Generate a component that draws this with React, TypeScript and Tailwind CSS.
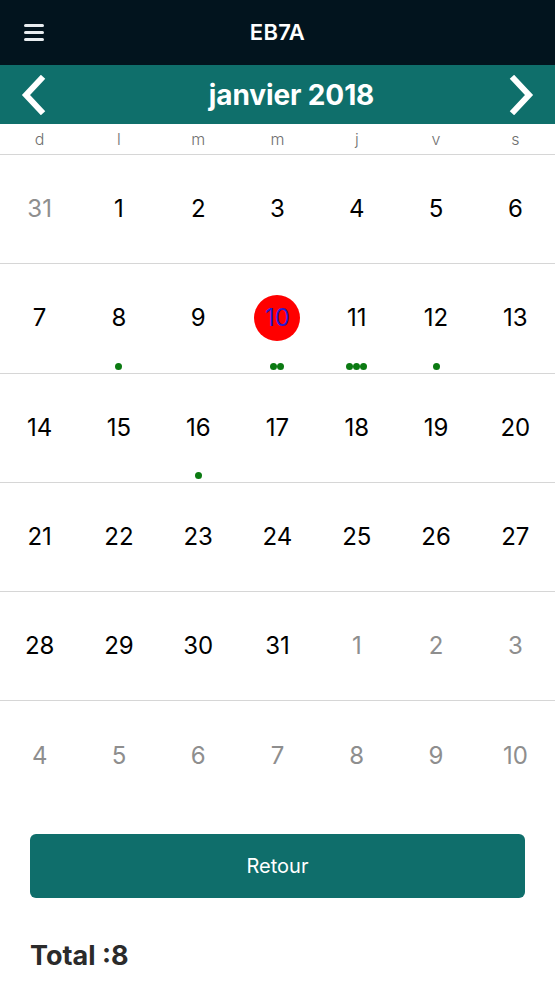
import React from 'react';

type Day = { n: number; muted?: boolean; today?: boolean; dots?: number };

const weekDays = ['d', 'l', 'm', 'm', 'j', 'v', 's'];

const dotsByDay: Record<number, number> = { 8: 1, 10: 2, 11: 3, 12: 1, 16: 1 };

function buildWeeks(): Day[][] {
  const days: Day[] = [{ n: 31, muted: true }];
  for (let i = 1; i <= 31; i++) {
    days.push({ n: i, today: i === 10, dots: dotsByDay[i] });
  }
  for (let i = 1; i <= 10; i++) days.push({ n: i, muted: true });
  const weeks: Day[][] = [];
  for (let i = 0; i < days.length; i += 7) weeks.push(days.slice(i, i + 7));
  return weeks;
}

function Chevron({ dir }: { dir: 'left' | 'right' }) {
  return (
    <svg width="30" height="40" viewBox="0 0 30 40" fill="none">
      <path
        d={dir === 'left' ? 'M23 4 L8 20 L23 36' : 'M7 4 L22 20 L7 36'}
        stroke="white"
        strokeWidth="6"
        strokeLinecap="square"
      />
    </svg>
  );
}

export default function App() {
  const weeks = buildWeeks();

  return (
    <div className="w-[555px] h-[987px] bg-white font-['Inter','Liberation_Sans',sans-serif] overflow-hidden">
      {/* Nav bar */}
      <div className="h-[65px] bg-[#02141e] flex items-center px-6 relative">
        <div className="flex flex-col gap-[4px] w-[20px]">
          <span className="h-[3px] bg-[#e8edf0] rounded-sm" />
          <span className="h-[3px] bg-[#e8edf0] rounded-sm" />
          <span className="h-[3px] bg-[#e8edf0] rounded-sm" />
        </div>
        <div className="flex-1 text-center text-white text-[22px] font-semibold tracking-[0.3px] -ml-[20px]">EB7A</div>
      </div>

      {/* Month header */}
      <div className="h-[59px] bg-[#0f6f6b] flex items-center justify-between px-[18px]">
        <Chevron dir="left" />
        <div className="text-white text-[28px] font-bold tracking-[-0.1px] ml-[28px]">janvier 2018</div>
        <Chevron dir="right" />
      </div>

      {/* Weekday header */}
      <div className="grid grid-cols-7 h-[31px] border-b border-[#d6d6d6] items-center">
        {weekDays.map((d, i) => (
          <div key={i} className="text-center text-[16px] font-light text-[#6f6f6f]">{d}</div>
        ))}
      </div>

      {/* Weeks */}
      {weeks.map((week, wi) => (
        <div
          key={wi}
          className={`grid grid-cols-7 h-[109.3px] ${wi < weeks.length - 1 ? 'border-b border-[#d6d6d6]' : ''}`}
        >
          {week.map((day, di) => (
            <div key={di} className="relative flex items-center justify-center">
              {day.today ? (
                <div className="w-[46px] h-[46px] rounded-full bg-[#ff0000] flex items-center justify-center text-[24px] text-[#2a1ad0]">
                  {day.n}
                </div>
              ) : (
                <span className={`text-[24px] ${day.muted ? 'text-[#8e8e8e]' : 'text-black'}`}>{day.n}</span>
              )}
              {day.dots ? (
                <div className="absolute bottom-[3px] left-0 right-0 flex justify-center">
                  {Array.from({ length: day.dots }).map((_, k) => (
                    <span key={k} className="w-[7px] h-[7px] rounded-full bg-[#0b7a12]" />
                  ))}
                </div>
              ) : null}
            </div>
          ))}
        </div>
      ))}

      {/* Footer */}
      <div className="px-[30px] pt-[23px]">
        <button className="w-full h-[64px] rounded-[6px] bg-[#0f6e6b] text-white text-[20px]">Retour</button>
        <div className="mt-[38px] text-[27px] font-bold text-[#2b2b2b]">Total :8</div>
      </div>
    </div>
  );
}
